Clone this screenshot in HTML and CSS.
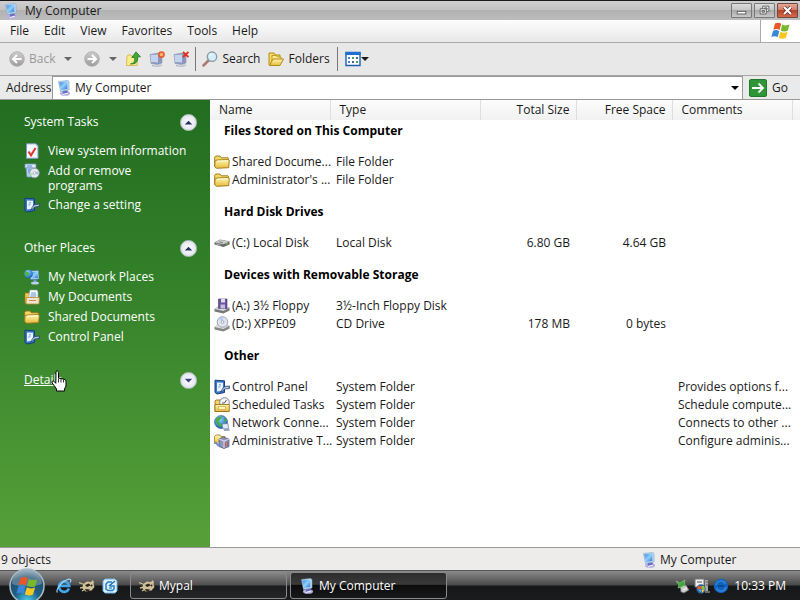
FILE: index.html
```html
<!DOCTYPE html>
<html lang="en">
<head>
<meta charset="utf-8">
<title>My Computer</title>
<link rel="stylesheet" href="styles.css">
</head>
<body>
<svg class="sprite" aria-hidden="true">
  <defs>
    <linearGradient id="g-screen" x1="0" y1="0" x2="1" y2="1"><stop offset="0" stop-color="#2f7fe0"/><stop offset=".5" stop-color="#8fd0fa"/><stop offset="1" stop-color="#2a6fd0"/></linearGradient>
    <linearGradient id="g-folder" x1="0" y1="0" x2="0" y2="1"><stop offset="0" stop-color="#fff6b0"/><stop offset="1" stop-color="#e6bb3c"/></linearGradient>
    <linearGradient id="g-grey" x1="0" y1="0" x2="0" y2="1"><stop offset="0" stop-color="#cdcdcd"/><stop offset="1" stop-color="#9c9c9c"/></linearGradient>
    <radialGradient id="g-globe" cx=".4" cy=".3" r=".8"><stop offset="0" stop-color="#8fd4ff"/><stop offset="1" stop-color="#0b4ea8"/></radialGradient>
    <radialGradient id="g-orb" cx=".5" cy=".95" r=".95"><stop offset="0" stop-color="#4fd0f0"/><stop offset=".4" stop-color="#1d5f86"/><stop offset=".75" stop-color="#24506c"/><stop offset="1" stop-color="#8fa9b8"/></radialGradient>
  </defs>
  <symbol id="i-computer" viewBox="0 0 16 16">
    <ellipse cx="9" cy="13.500" rx="5" ry="2.300" fill="#b5b2e0"/><path d="M6 10l5-.5 1.500 3.500-5 1.500z" fill="#6f6cc0"/>
    <path d="M2.500 1.500L11.500 .5l1.500 1v8.500L4.500 11.500z" fill="#c5dcf2" stroke="#7ba3cc" stroke-width=".6"/>
    <path d="M3.300 2.500l8-1v7.500L5 10z" fill="url(#g-screen)"/><path d="M7 14.500l5-1.500" stroke="#fff"/>
  </symbol>
  <symbol id="i-network" viewBox="0 0 16 16">
    <path d="M5.500 2L14.500 1.500l.5 8.500-8.500.5z" fill="#cfe8fa" stroke="#3d6fa8" stroke-width=".6"/><path d="M6.500 3l7-.5.5 6.500-7 .5z" fill="url(#g-screen)"/>
    <circle cx="4.500" cy="5" r="4.300" fill="url(#g-globe)"/><path d="M1 4c2-2 3-1 4 0s-1 2-2 4c-1-1-2-2-2-4z" fill="#4ab54a"/>
    <path d="M9 10.500h3l1.500 3H10z" fill="#6a8fd0"/><ellipse cx="11" cy="14" rx="4" ry="1.500" fill="#b9d0e8"/>
  </symbol>
  <symbol id="i-folder" viewBox="0 0 16 16">
    <path d="M.7 12.500V3.200l1-1.200H6l1.300 1.800H14l.6 1v1.700" fill="#f5d766" stroke="#9a7415" stroke-width=".9"/>
    <path d="M3 6l11-.4 1.300.8-.6 7.300-12 .6-2-1.500L1 7z" fill="url(#g-folder)" stroke="#9a7415" stroke-width=".9"/>
    <path d="M3.200 7.200L14 6.700" stroke="#fffbd8"/>
  </symbol>
  <symbol id="i-folders" viewBox="0 0 16 16">
    <path d="M1 14V2h5l1.500 2H12v3" fill="#f4da62" stroke="#b38b14"/><path d="M4 14V4.500h4L9.500 6H13v2" fill="#fbe98a" stroke="#b38b14" stroke-width=".8"/>
    <path d="M1.500 14.500l3.500-6.500h10.500l-3.500 6.500z" fill="url(#g-folder)" stroke="#b38b14"/>
  </symbol>
  <symbol id="i-docs" viewBox="0 0 16 16">
    <path d="M1 4h5v10H1z" fill="#f3c94a" stroke="#a47912" stroke-width=".7"/>
    <path d="M6 1h7l1 2v9H4z" fill="#fff" stroke="#8ba1bd" stroke-width=".7"/><path d="M7 4h5M6.500 6h6M6 8h6" stroke="#5f8bc6"/>
    <path d="M2.500 8.500h12.800l-.3 6.500H2z" fill="#f0e6cf" stroke="#b88a30" stroke-width=".8"/><path d="M5 11.500h7" stroke="#d68a50"/>
  </symbol>
  <symbol id="i-check" viewBox="0 0 16 16">
    <path d="M2.500.8h9.500l2 2v12.500h-11.500z" fill="#f4f7ff" stroke="#8496c8"/><path d="M12 1v2h2" fill="#9fb3e0"/>
    <path d="M4.500 8.500l2.500 3.800L11.500 5" fill="none" stroke="#dd3526" stroke-width="2"/>
  </symbol>
  <symbol id="i-programs" viewBox="0 0 16 16">
    <path d="M1 1h11v4H1z" fill="#dce9fa" stroke="#6f90bd" stroke-width=".8"/><path d="M2 5h7v9H3z" fill="#b9d2ee" stroke="#6f90bd" stroke-width=".8"/><path d="M3 3h5M4 7h3M4 9h3" stroke="#4f82c9"/>
    <circle cx="10.500" cy="10" r="4.800" fill="#e3e8ef" stroke="#8998ab" stroke-width=".8"/><path d="M10.500 10L7 13a5 5 0 0 1-1-3z" fill="#aee3a8"/><path d="M10.500 10l4-2v4z" fill="#b6b9ee"/><circle cx="10.500" cy="10" r="1.300" fill="#fff" stroke="#8998ab" stroke-width=".6"/>
  </symbol>
  <symbol id="i-panel" viewBox="0 0 16 16">
    <path d="M1 1.200l9.500.6v11.700L3 15 1 13.500z" fill="#3a78c8" stroke="#173d7c" stroke-width="1"/><path d="M3 3.500l6 .3v8l-6 .8z" fill="#e8f4ff"/>
    <path d="M5 9V7h2M5 5.500h2" stroke="#7aa8de" stroke-width=".8" fill="none"/><path d="M6.500 13l3.500-5.500 5.500-.5v2.500l-4.500.5z" fill="#6c8cba" stroke="#264468" stroke-width=".7"/><path d="M8 11.500l2.500-2.500 4-.7" stroke="#d7e6f5" fill="none" stroke-width=".8"/>
  </symbol>
  <symbol id="i-disk" viewBox="0 0 16 16">
    <path d="M.5 7.500L6 4.800l9.500 1.700v3L9.500 12 .5 9.500z" fill="#666"/><path d="M.5 7.500L6 4.800l9.500 1.700-6 2.700z" fill="#cfcfcf" stroke="#999" stroke-width=".4"/><path d="M5 6.800l4 .8" stroke="#888"/><path d="M2 9l5 1.200" stroke="#aaa"/><path d="M12 9.300l2-.8" stroke="#6ed050"/>
  </symbol>
  <symbol id="i-floppy" viewBox="0 0 16 16">
    <path d="M.5 11L4 8.500l11.500 1v3l-6 3-9-2z" fill="#777"/><path d="M.5 11L4 8.500l11.500 1-6 3.500z" fill="#d8d8d8"/>
    <path d="M4.500 1H13v9.500H4.500z" fill="#6b549f" stroke="#43346e" stroke-width=".6"/><path d="M7 1h4v3.500H7z" fill="#dedce8"/><path d="M6.500 6.500H11v4H6.500z" fill="#cbb9de"/>
  </symbol>
  <symbol id="i-cd" viewBox="0 0 16 16">
    <path d="M.5 11L4 8.500l11.500 1v3l-6 3-9-2z" fill="#858585"/><path d="M.5 11L4 8.500l11.500 1-6 3.500z" fill="#dedede"/>
    <circle cx="8.500" cy="6" r="5.300" fill="#dfe4ee" stroke="#8a94a8" stroke-width=".8"/><path d="M8.500 6L5 2.500A5 5 0 0 1 9 1z" fill="#b4c7f0"/><circle cx="8.500" cy="6" r="1.400" fill="#fff" stroke="#8189a0" stroke-width=".7"/>
  </symbol>
  <symbol id="i-sched" viewBox="0 0 16 16">
    <path d="M1 14.500V4l1-1h4l1.500 2H14v9.500z" fill="#f2d468" stroke="#9a7415" stroke-width=".9"/>
    <circle cx="10.500" cy="5.500" r="4.800" fill="#f4f4f8" stroke="#82848e"/><path d="M10.500 6l2-3M10.500 6H8" stroke="#333" stroke-width=".8"/>
    <path d="M1 14.500V7.500h14.300v7z" fill="url(#g-folder)" stroke="#9a7415" stroke-width=".9"/><path d="M4.500 9.500h7v3h-7z" fill="#fff4c0" stroke="#c29c34" stroke-width=".6"/>
  </symbol>
  <symbol id="i-globe" viewBox="0 0 16 16">
    <circle cx="7" cy="7" r="6.500" fill="url(#g-globe)" stroke="#16467c" stroke-width=".5"/><path d="M2 4c2-3 6-3 6-2S6 4 5 6s3 2 3 4-2 3-3 1-4-4-3-7zM10 3l3 2-2 3z" fill="#45b048"/>
    <path d="M8 9l6-.5.5 5L9 14z" fill="#e3eaf4" stroke="#5d7da8" stroke-width=".7"/><path d="M10 15h5.500" stroke="#7d8ea5" stroke-width="1.500"/>
  </symbol>
  <symbol id="i-admin" viewBox="0 0 16 16">
    <path d="M.5 11V3.500L2 2h4l1 1.500h4V8" fill="url(#g-folder)" stroke="#a07b1c" stroke-width=".8"/>
    <path d="M5 6l4-2 6 2v7.500l-5 2-5-2z" fill="#8f93b8" stroke="#4a4e78" stroke-width=".7"/><path d="M5 6l5 2v7M10 8l5-2" stroke="#d9dcf0" fill="none"/><path d="M11.500 9.500v4M13.500 9v4" stroke="#c05a4c"/><path d="M1 9l4 4" stroke="#6a8fd0" stroke-width="2"/>
  </symbol>
  <symbol id="i-up" viewBox="0 0 16 16">
    <path d="M1.500 14.500L2 5.500 3 4h3l1 1.500h5.500l-.5 9z" fill="#fbec8c" stroke="#d1b040" stroke-width=".8"/>
    <path d="M5.500 13c4-1 4.500-3 4-6.500H6.800L11 .8l4.500 5h-2.800c.3 5-1.700 7.500-7.200 7.200z" fill="#3cab36" stroke="#1e6f1c" stroke-width=".7"/>
  </symbol>
  <symbol id="i-map" viewBox="0 0 16 16">
    <path d="M1 3.500l8-1.500 4 1.500V12l-4 1.500-7-1z" fill="#8d97bb" stroke="#8d97b5" stroke-width=".6"/><path d="M1.500 4l7.500-.5v8l-7-.5z" fill="#c3d3ee"/><path d="M3 14.500l6 .8 4-1.500" stroke="#b7bac9" stroke-width="1.300" fill="none"/>
  </symbol>
  <symbol id="i-search" viewBox="0 0 16 16">
    <path d="M1.500 14.500l5-5" stroke="#a87a70" stroke-width="2.500" stroke-linecap="round"/><circle cx="10" cy="5.700" r="4.700" fill="#d4effa" stroke="#8b9aa5" stroke-width="1.400"/><path d="M7.500 5c.5-1.500 1.500-2 3-2" stroke="#fff" fill="none"/>
  </symbol>
  <symbol id="i-back" viewBox="0 0 16 16"><circle cx="8" cy="8" r="7.300" fill="url(#g-grey)" stroke="#aaa" stroke-width=".8"/><path d="M12.500 8H4.500M8 4L4 8l4 4" stroke="#fff" stroke-width="2" fill="none"/></symbol>
  <symbol id="i-fwd" viewBox="0 0 16 16"><circle cx="8" cy="8" r="7.300" fill="url(#g-grey)" stroke="#aaa" stroke-width=".8"/><path d="M3.500 8h8M8 4l4 4-4 4" stroke="#fff" stroke-width="2" fill="none"/></symbol>
  <symbol id="i-views" viewBox="0 0 16 16">
    <path d="M1 1.500h14v13H1z" fill="#fff" stroke="#1c5fb5" stroke-width="1.400"/><path d="M.5 1h15v3H.5z" fill="#1f6fd0"/>
    <path d="M3 6h2v2H3zM3 10h2v2H3z" fill="#4a7fc0"/><path d="M7 6h2v2H7zM11 10h2v2h-2z" fill="#46a552"/><path d="M11 6h2v2h-2zM7 10h2v2H7z" fill="#555b90"/>
  </symbol>
  <symbol id="i-down" viewBox="0 0 8 4"><path d="M0 0h8L4 4z" fill="currentColor"/></symbol>
  <symbol id="i-flag" viewBox="0 0 20 18">
    <path d="M4 1.500c2.500-1.300 4.500-1 6.200.3L8.600 8C6.800 6.800 4.800 6.700 2.300 7.800z" fill="#e8562a"/>
    <path d="M11.200 2.400c2.300 1.400 4.600 1.300 7.300.2l-1.700 6.100c-2.500 1.200-4.800 1-7.100-.2z" fill="#77b82c"/>
    <path d="M2 8.900c2.400-1.200 4.500-1 6.300.3l-1.700 6.100C4.900 14.100 2.800 14 .3 15.100z" fill="#3b86d8"/>
    <path d="M9.400 9.700c2.300 1.300 4.600 1.200 7.200.1l-1.800 6.200c-2.500 1.200-4.800 1-7.100-.2z" fill="#f8c620"/>
  </symbol>
  <symbol id="i-ie" viewBox="0 0 16 16">
    <path d="M13 10.500A5.200 5.200 0 1 1 13.300 8H4" fill="none" stroke="#45a6ec" stroke-width="2.600"/><path d="M1.500 14.500C-1 12 6 3 12 1.300c3-.8 3.500 1 2 3.200" fill="none" stroke="#9ad2f6" stroke-width="1.200"/>
  </symbol>
  <symbol id="i-mypal" viewBox="0 0 16 16">
    <path d="M0 4.500l4 1.500M1 10l4-1M3 13l3-2" stroke="#cdbf94" stroke-width="1.300"/><path d="M4 6l4-2.500 4 .5 1.500-2 1.500 2-.5 2 1 3-3 3.500-6 1-3-3z" fill="#cfc19a"/><path d="M6 7l4-1.500 1.500 2L8 9zM6 11l5 .5-1 1.500H7z" fill="#2a241a"/><circle cx="12.500" cy="7.500" r="1" fill="#2a241a"/>
  </symbol>
  <symbol id="i-desk" viewBox="0 0 16 16">
    <path d="M3 1h10l2 2v10l-2 2H3l-2-2V3z" fill="#d9effc" stroke="#73b6e4"/><path d="M10 4H6L4 6v5l2 1.500h4.500L12 11V8H8" fill="none" stroke="#2680c8" stroke-width="1.500"/><path d="M7 8l6-5M7 10h3" stroke="#1e65a5" stroke-width="1.200"/>
  </symbol>
  <symbol id="i-usb" viewBox="0 0 16 16">
    <path d="M5 8l6-1 3 5-5 3-3-1z" fill="#c7cac7" stroke="#5f635f" stroke-width=".7"/><path d="M1 3l4 2 5-3-1 6-6 2 1-3z" fill="#3fa53a" stroke="#7cd073" stroke-width=".7"/><path d="M8 12l4-2" stroke="#fff"/>
  </symbol>
  <symbol id="i-tray" viewBox="0 0 16 16">
    <path d="M1 1h9v8H1z" fill="#eee" stroke="#777"/><path d="M11 2h3v11h-3z" fill="#aaa"/><path d="M3 4h5M12 4h2M12 7h2" stroke="#555"/><path d="M11 14h5" stroke="#bbb"/>
    <circle cx="7" cy="11" r="4.700" fill="#2f5e9a"/><path d="M4 8h3v3H3z" fill="#e75b2b"/><path d="M7.500 8H10l1 3H7.500z" fill="#8cc63c"/><path d="M3.500 11.500H7v3z" fill="#57b0f0"/><path d="M7.500 11.500H11l-3 3.500z" fill="#fad037"/>
  </symbol>
  <symbol id="i-swirl" viewBox="0 0 16 16">
    <circle cx="8" cy="8" r="7.200" fill="#1263bd"/><path d="M3 7a5 5 0 0 1 9.500-1M13 9a5 5 0 0 1-9.500 1" fill="none" stroke="#2f86dc" stroke-width="1.500"/><path d="M5 8h6" stroke="#0a4a94" stroke-width="2"/>
  </symbol>
</svg>

<main class="window">
  <header class="titlebar">
    <svg class="icon"><use href="#i-computer"/></svg>
    <h1 class="title">My Computer</h1>
    <div class="controls">
      <button class="control" aria-label="Minimize"><svg viewBox="0 0 21 15"><rect x="5.500" y="8.500" width="10" height="3" fill="#fff" stroke="#555"/></svg></button>
      <button class="control" aria-label="Restore"><svg viewBox="0 0 21 15"><path d="M8.500 2.500h7v6h-7z" fill="#fff" stroke="#555"/><path d="M10.500 4.500h3v2h-3z" fill="#bbb" stroke="#555"/><path d="M5.500 5.500h7v6h-7z" fill="#fff" stroke="#555"/><path d="M7.500 7.500h3v2h-3z" fill="#bbb" stroke="#555"/></svg></button>
      <button class="control control-close" aria-label="Close"><svg viewBox="0 0 21 15"><path d="M6.500 3.500l8 8M14.500 3.500l-8 8" stroke="#5a2a24" stroke-width="4"/><path d="M6.500 3.500l8 8M14.500 3.500l-8 8" stroke="#fff" stroke-width="2.400"/></svg></button>
    </div>
  </header>

  <div class="menubar">
    <nav class="menus" aria-label="Menu">
      <button>File</button><button>Edit</button><button>View</button><button>Favorites</button><button>Tools</button><button>Help</button>
    </nav>
    <div class="brand"><svg class="flag"><use href="#i-flag"/></svg></div>
  </div>

  <div class="toolbar">
    <button class="tool tool-off" disabled><svg class="icon"><use href="#i-back"/></svg>Back<svg class="arrow arrow-wide"><use href="#i-down"/></svg></button>
    <button class="tool tool-off tool-fwd" disabled aria-label="Forward"><svg class="icon"><use href="#i-fwd"/></svg><svg class="arrow arrow-wide"><use href="#i-down"/></svg></button>
    <div class="tool-group">
      <button class="tool" aria-label="Up"><svg class="icon"><use href="#i-up"/></svg></button>
      <button class="tool" aria-label="Map drive"><svg class="icon" viewBox="0 0 16 16"><use href="#i-map"/><circle cx="12.500" cy="3.500" r="2.600" fill="#f6b26a" stroke="#e8572c" stroke-width="1.500"/></svg></button>
      <button class="tool" aria-label="Disconnect drive"><svg class="icon" viewBox="0 0 16 16"><use href="#i-map"/><path d="M10 1l5.500 5M15.500 1L10 6" stroke="#e02f1c" stroke-width="1.800"/></svg></button>
    </div>
    <div class="tool-group tool-labels">
      <button class="tool"><svg class="icon"><use href="#i-search"/></svg>Search</button>
      <button class="tool"><svg class="icon"><use href="#i-folders"/></svg>Folders</button>
    </div>
    <div class="tool-group">
      <button class="tool tool-views" aria-label="Views"><svg class="icon"><use href="#i-views"/></svg><svg class="arrow"><use href="#i-down"/></svg></button>
    </div>
  </div>

  <form class="addressbar">
    <label for="address">Address</label>
    <div class="combo">
      <svg class="icon"><use href="#i-computer"/></svg>
      <input id="address" type="text" value="My Computer">
      <button type="button" class="drop" aria-label="Show addresses"><svg class="arrow"><use href="#i-down"/></svg></button>
    </div>
    <button type="button" class="go"><svg class="go-icon" viewBox="0 0 18 18"><rect x=".5" y=".5" width="17" height="17" rx="1.500" fill="#2f9638" stroke="#247a2a"/><path d="M3 9h11M9.500 4.500L14 9l-4.500 4.500" fill="none" stroke="#fff" stroke-width="1.800"/></svg>Go</button>
  </form>

  <div class="content">
    <aside class="sidebar">
      <section class="box">
        <h2 class="box-head">System Tasks<button class="toggle" aria-label="Collapse System Tasks"><svg viewBox="0 0 16 16"><path d="M4 10l4-4 4 4z" fill="#26305c"/></svg></button></h2>
        <ul>
          <li><a href="#"><svg class="icon"><use href="#i-check"/></svg><span>View system information</span></a></li>
          <li><a href="#"><svg class="icon"><use href="#i-programs"/></svg><span>Add or remove<br>programs</span></a></li>
          <li><a href="#"><svg class="icon"><use href="#i-panel"/></svg><span>Change a setting</span></a></li>
        </ul>
      </section>
      <section class="box">
        <h2 class="box-head">Other Places<button class="toggle" aria-label="Collapse Other Places"><svg viewBox="0 0 16 16"><path d="M4 10l4-4 4 4z" fill="#26305c"/></svg></button></h2>
        <ul>
          <li><a href="#"><svg class="icon"><use href="#i-network"/></svg><span>My Network Places</span></a></li>
          <li><a href="#"><svg class="icon"><use href="#i-docs"/></svg><span>My Documents</span></a></li>
          <li><a href="#"><svg class="icon"><use href="#i-folder"/></svg><span>Shared Documents</span></a></li>
          <li><a href="#"><svg class="icon"><use href="#i-panel"/></svg><span>Control Panel</span></a></li>
        </ul>
      </section>
      <section class="box">
        <h2 class="box-head"><span class="hovered">Details<svg class="pointer" viewBox="0 0 16 22"><path d="M5 1.500c1-1 2.500-.5 2.500 1V8l5.500 1.200c1.500.4 2 1.200 2 2.500v4.300l-1.500 3V21h-8v-2L1.200 13c-.8-1.500.8-2.700 2-1.500l1.600 1.800z" fill="#fff" stroke="#000"/><path d="M7.500 8.500v4M10 9v3.500M12.500 9.500v3" stroke="#000" stroke-width=".8"/></svg></span><button class="toggle" aria-label="Expand Details"><svg viewBox="0 0 16 16"><path d="M4 6l4 4 4-4z" fill="#3a3f86"/></svg></button></h2>
      </section>
    </aside>

    <div class="listing">
      <table>
        <colgroup><col class="c-name"><col class="c-type"><col class="c-size"><col class="c-free"><col class="c-note"><col></colgroup>
        <thead><tr><th>Name</th><th>Type</th><th class="num">Total Size</th><th class="num">Free Space</th><th>Comments</th><td></td></tr></thead>
        <tbody>
          <tr class="group"><th colspan="6">Files Stored on This Computer</th></tr>
          <tr><td><div class="name"><svg class="icon"><use href="#i-folder"/></svg>Shared Docume...</div></td><td>File Folder</td><td></td><td></td><td></td><td></td></tr>
          <tr><td><div class="name"><svg class="icon"><use href="#i-folder"/></svg>Administrator's ...</div></td><td>File Folder</td><td></td><td></td><td></td><td></td></tr>
        </tbody>
        <tbody>
          <tr class="group"><th colspan="6">Hard Disk Drives</th></tr>
          <tr><td><div class="name"><svg class="icon"><use href="#i-disk"/></svg>(C:) Local Disk</div></td><td>Local Disk</td><td class="num">6.80 GB</td><td class="num">4.64 GB</td><td></td><td></td></tr>
        </tbody>
        <tbody>
          <tr class="group"><th colspan="6">Devices with Removable Storage</th></tr>
          <tr><td><div class="name"><svg class="icon"><use href="#i-floppy"/></svg>(A:) 3½ Floppy</div></td><td>3½-Inch Floppy Disk</td><td></td><td></td><td></td><td></td></tr>
          <tr><td><div class="name"><svg class="icon"><use href="#i-cd"/></svg>(D:) XPPE09</div></td><td>CD Drive</td><td class="num">178 MB</td><td class="num">0 bytes</td><td></td><td></td></tr>
        </tbody>
        <tbody>
          <tr class="group"><th colspan="6">Other</th></tr>
          <tr><td><div class="name"><svg class="icon"><use href="#i-panel"/></svg>Control Panel</div></td><td>System Folder</td><td></td><td></td><td>Provides options f...</td><td></td></tr>
          <tr><td><div class="name"><svg class="icon"><use href="#i-sched"/></svg>Scheduled Tasks</div></td><td>System Folder</td><td></td><td></td><td>Schedule compute...</td><td></td></tr>
          <tr><td><div class="name"><svg class="icon"><use href="#i-globe"/></svg>Network Conne...</div></td><td>System Folder</td><td></td><td></td><td>Connects to other ...</td><td></td></tr>
          <tr><td><div class="name"><svg class="icon"><use href="#i-admin"/></svg>Administrative T...</div></td><td>System Folder</td><td></td><td></td><td>Configure adminis...</td><td></td></tr>
        </tbody>
      </table>
    </div>
  </div>

  <footer class="statusbar"><span>9 objects</span><span class="zone"><svg class="icon"><use href="#i-computer"/></svg>My Computer</span></footer>
</main>

<nav class="taskbar" aria-label="Taskbar">
  <button class="start" aria-label="Start"><svg viewBox="0 0 36 36"><circle cx="18" cy="18" r="17" fill="url(#g-orb)" stroke="#a9bcc6" stroke-width="1.500"/><path d="M3 16a15 14 0 0 1 30 0c-8 3-22 3-30 0z" fill="#fff" opacity=".25"/><use href="#i-flag" x="7" y="8" width="23" height="21"/></svg></button>
  <div class="quick">
    <button aria-label="Internet Explorer"><svg class="icon"><use href="#i-ie"/></svg></button>
    <button aria-label="Mypal browser"><svg class="icon"><use href="#i-mypal"/></svg></button>
    <button aria-label="Show desktop"><svg class="icon"><use href="#i-desk"/></svg></button>
  </div>
  <div class="tasks">
    <button class="task"><svg class="icon"><use href="#i-mypal"/></svg>Mypal</button>
    <button class="task task-active"><svg class="icon"><use href="#i-computer"/></svg>My Computer</button>
  </div>
  <div class="tray">
    <svg class="icon"><use href="#i-usb"/></svg><svg class="icon"><use href="#i-tray"/></svg><svg class="icon"><use href="#i-swirl"/></svg>
    <time>10:33 PM</time>
  </div>
</nav>
</body>
</html>
```
FILE: styles.css
```css
* { box-sizing: border-box; }

body {
  margin: 0;
  height: 100vh;
  display: flex;
  flex-direction: column;
  overflow: hidden;
  font: 12px/16px "Open Sans", "Noto Sans", sans-serif;
  color: #1a1a1a;
  background: #fff;
}

button {
  display: flex;
  align-items: center;
  margin: 0;
  padding: 0;
  border: 0;
  background: none;
  font: inherit;
  color: inherit;
}

h1, h2, ul { margin: 0; padding: 0; font: inherit; list-style: none; }
.sprite { position: absolute; width: 0; height: 0; }
.icon { flex: none; display: block; width: 16px; height: 16px; }
.arrow { flex: none; width: 8px; height: 4px; }

.window { flex: 1; min-height: 0; display: flex; flex-direction: column; }

/* Title bar */
.titlebar {
  display: flex;
  align-items: center;
  gap: 6px;
  height: 20px;
  padding: 0 2px 0 3px;
  border-top: 1px solid #1c1718;
  background: linear-gradient(#cfcfcf, #c2c2c2 45%, #b2b2b2 50%, #bcbcbc);
}
.title { flex: 1; }
.controls { display: flex; gap: 2px; }
.control {
  width: 21px;
  height: 15px;
  border: 1px solid #77777a;
  border-radius: 1px;
  background: linear-gradient(#dcdcdc, #c4c4c4 50%, #a9a9a9 50%, #c9c9c9);
}
.control svg { width: 100%; height: 100%; }
.control-close { background: linear-gradient(#e4a898, #d17862 50%, #b9432a 50%, #d66a48); border-color: #6b4a46; }

/* Menus */
.menubar {
  display: flex;
  height: 23px;
  border-bottom: 1px solid #aaa;
  background: linear-gradient(#fdfdfd, #e9e8e8);
}
.menus { flex: 1; display: flex; align-items: center; gap: 15px; padding-left: 10px; }
.brand {
  display: flex;
  align-items: center;
  justify-content: center;
  width: 40px;
  border-left: 1px solid #aaa;
  background: #fff;
}
.flag { width: 20px; height: 18px; }

/* Toolbar */
.toolbar {
  display: flex;
  align-items: center;
  height: 33px;
  padding-left: 9px;
  border-bottom: 1px solid #a6a6a6;
  background: #e9e8e8;
}
.tool { gap: 4px; }
.tool-off { color: #999; }
.tool-off .arrow { color: #666; }
.arrow-wide { margin-left: 5px; }
.tool-fwd { margin: 0 8px 0 12px; }
.tool-group { display: flex; gap: 8px; }
.tool-labels {
  margin: 0 7px 0 6px;
  padding: 4px 7px 4px 6px;
  border: solid #777;
  border-width: 0 1px;
}
.tool-views { gap: 0; }

/* Address bar */
.addressbar {
  display: flex;
  align-items: center;
  height: 24px;
  padding-left: 6px;
  border-bottom: 1px solid #999;
  background: #ebeaea;
}
.addressbar label { width: 46px; }
.combo {
  flex: 1;
  display: flex;
  align-items: center;
  gap: 2px;
  height: 23px;
  padding-left: 3px;
  border: 1px solid #999;
  border-bottom: 0;
  background: #fff;
}
.combo input { flex: 1; min-width: 0; padding: 0 0 0 1px; border: 0; outline: 0; background: none; font: inherit; color: inherit; }
.drop { padding: 3px; color: #000; }
.go { gap: 5px; padding: 0 12px 0 6px; }
.go-icon { width: 18px; height: 18px; }

/* Task pane */
.content { flex: 1; min-height: 0; display: flex; }
.sidebar {
  flex: none;
  width: 210px;
  padding: 12px 13px 0 24px;
  color: #fff;
  background: linear-gradient(#226d20, #33802a 40%, #57a039);
}
.box { margin-bottom: 25px; }
.box-head { display: flex; align-items: center; justify-content: space-between; height: 20px; margin-bottom: 11px; }
.box li { margin-bottom: 4px; }
.box a { display: flex; gap: 8px; color: inherit; line-height: 15px; text-decoration: none; }
.toggle {
  justify-content: center;
  width: 17px;
  height: 17px;
  border: 1px solid #b7c8c0;
  border-radius: 50%;
  background: radial-gradient(#fff, #e8e9f4 60%, #b4bfc9);
}
.toggle svg { width: 15px; height: 15px; }
.hovered { position: relative; text-decoration: underline; }
.pointer { position: absolute; left: 27px; top: -2px; width: 16px; height: 22px; }

/* File list */
.listing { flex: 1; min-width: 0; overflow: hidden; background: #fff; }
table { width: 100%; border-collapse: collapse; table-layout: fixed; }
.c-name { width: 120px; }
.c-type { width: 150px; }
.c-size { width: 96px; }
.c-free { width: 96px; }
.c-note { width: 120px; }
th { font-weight: 400; text-align: left; }
td, th { height: 18px; padding: 0 0 0 6px; white-space: nowrap; line-height: 18px; }
td:first-child { padding-left: 4px; }
thead tr { background: linear-gradient(#fcfcfc, #f1f1f1); }
thead th { height: 20px; padding-left: 9px; border-right: 1px solid #dedede; }
th.num, td.num { padding: 0 6px 0 0; text-align: right; }
.name { display: flex; align-items: center; gap: 2px; }
.group th { padding: 14px 0 13px 14px; font-weight: 700; color: #000; }
thead + tbody .group th { padding-top: 2px; }

/* Status bar */
.statusbar {
  display: flex;
  align-items: center;
  justify-content: space-between;
  height: 23px;
  padding: 1px 0 0 1px;
  border-top: 1px solid #999;
  background: #eeeceb;
}
.zone { display: flex; gap: 3px; width: 159px; }

/* Taskbar */
.taskbar {
  flex: none;
  display: flex;
  align-items: center;
  height: 30px;
  padding-left: 9px;
  border-top: 1px solid #555;
  color: #fff;
  background: linear-gradient(#8a8a8a, #4a4a4a 48%, #161718 52%, #1b1c1e);
}
.start { flex: none; width: 36px; height: 36px; }
.start svg { width: 36px; height: 36px; }
.quick { display: flex; gap: 7px; padding: 0 12px 0 11px; }
.tasks { flex: 1; display: flex; gap: 3px; min-width: 0; }
.task {
  width: 157px;
  height: 27px;
  gap: 4px;
  padding-left: 8px;
  border: 1px solid #8a8a8a;
  border-radius: 3px;
  background: linear-gradient(#858585, #4e4e4e 48%, #1b1c1d 52%, #242628);
}
.task-active { background: linear-gradient(#2c2c2c, #3a3a3a 45%, #0c0c0d 50%, #17181a); }
.tray { display: flex; align-items: center; gap: 3px; padding-right: 14px; }
.tray time { margin-left: 2px; }
```
